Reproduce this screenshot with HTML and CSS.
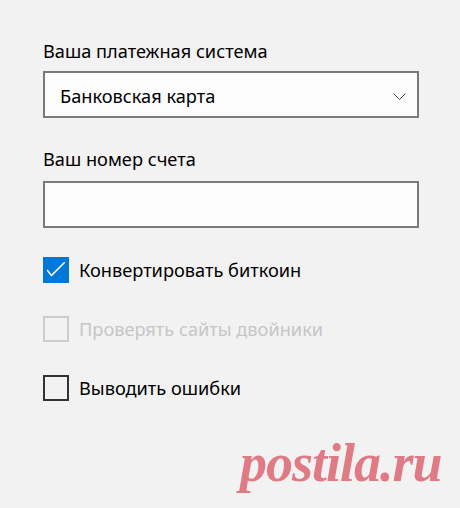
FILE: index.html
```html
<!DOCTYPE html>
<html lang="ru">
<head>
<meta charset="utf-8">
<title>Настройки</title>
<link rel="stylesheet" href="styles.css">
</head>
<body>
<main class="form">
  <div class="label">Ваша платежная система</div>
  <div class="select">
    <span class="select-value">Банковская карта</span>
    <svg class="chevron" width="13" height="7" viewBox="0 0 13 7"><polyline points="0.5,0.5 6.5,6.5 12.5,0.5" fill="none" stroke="#444" stroke-width="1"/></svg>
  </div>
  <div class="label label-second">Ваш номер счета</div>
  <div class="textbox"></div>
  <div class="checks">
    <div class="check">
      <span class="box box-checked">
        <svg width="26" height="26" viewBox="0 0 26 26"><polyline points="4.2,13 8.4,18.6 21.7,5.3" fill="none" stroke="#fff" stroke-width="1.5"/></svg>
      </span>
      <span class="check-text">Конвертировать биткоин</span>
    </div>
    <div class="check check-disabled">
      <span class="box"></span>
      <span class="check-text">Проверять сайты двойники</span>
    </div>
    <div class="check">
      <span class="box"></span>
      <span class="check-text">Выводить ошибки</span>
    </div>
  </div>
</main>
<div class="watermark">postila.ru</div>
</body>
</html>
```

FILE: styles.css
```css
html, body {
  margin: 0;
  padding: 0;
  background: #f2f2f2;
}
body {
  width: 460px;
  height: 508px;
  position: relative;
  overflow: hidden;
  font-family: "Noto Sans", "Open Sans", sans-serif;
  color: #000;
}
.form {
  padding: 38px 0 0 43px;
  width: 376px;
}
.label {
  font-size: 18.2px;
  line-height: 26px;
  height: 26px;
  margin-bottom: 7px;
  white-space: nowrap;
}
.label-second {
  margin-top: 28px;
  margin-bottom: 9px;
}
.select, .textbox {
  box-sizing: border-box;
  width: 376px;
  height: 47px;
  border: 2px solid #7a7a7a;
  background: #fcfcfc;
}
.select {
  display: flex;
  align-items: center;
  justify-content: space-between;
  padding: 2px 11px 0 15px;
}
.select-value {
  font-size: 18.2px;
  line-height: 26px;
}
.chevron {
  display: block;
  margin-top: 2px;
}
.checks {
  display: flex;
  flex-direction: column;
  gap: 33px;
  margin-top: 29px;
}
.check {
  display: flex;
  align-items: center;
  gap: 10px;
  height: 26px;
}
.box {
  box-sizing: border-box;
  width: 26px;
  height: 26px;
  border: 2px solid #333;
  flex: none;
}
.box svg {
  display: block;
}
.box-checked {
  background: #0078d7;
  border: none;
}
.check-text {
  font-size: 18.2px;
  line-height: 26px;
  white-space: nowrap;
}
.check-disabled .box {
  border-color: #cccccc;
}
.check-disabled .check-text {
  color: #c6c6c6;
}
.watermark {
  position: absolute;
  left: 240px;
  top: 428px;
  font-family: "Liberation Serif", serif;
  font-style: italic;
  font-weight: bold;
  font-size: 54px;
  line-height: 70px;
  color: #e07b85;
  letter-spacing: -1px;
}
```
